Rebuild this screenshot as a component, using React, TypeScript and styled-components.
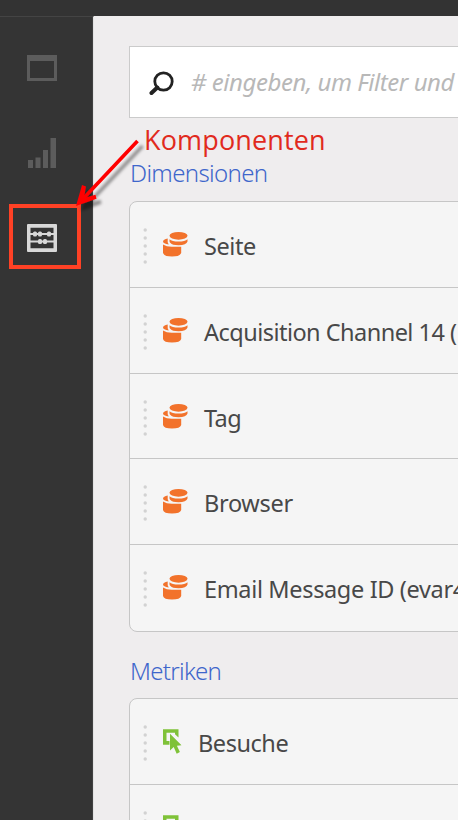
import React from 'react';
import styled, { createGlobalStyle } from 'styled-components';

const GlobalStyle = createGlobalStyle`
  * { box-sizing: border-box; }
  body { margin: 0; background: #efedee; overflow: hidden; }
`;

const Page = styled.div`
  position: relative;
  width: 458px;
  height: 820px;
  overflow: hidden;
  display: flex;
  flex-direction: column;
  background: #efedee;
  font-family: 'Noto Sans', 'Open Sans', sans-serif;
  color: #484848;
`;

const TopBar = styled.header`
  flex: 0 0 16px;
  background: #333333;
`;

const Body = styled.div`
  flex: 1;
  min-height: 0;
  display: flex;
`;

const Sidebar = styled.nav`
  flex: 0 0 94px;
  display: flex;
  flex-direction: column;
  padding: 38px 0 0 26px;
  background: #343434;
  border-top: 1px solid #444444;
  border-right: 1px solid #e2e2e2;
  box-shadow: inset -1px 0 #414141;
`;

const NavItem = styled.button<{ $gap?: number }>`
  display: block;
  width: 32px;
  height: 32px;
  margin: 0 0 ${(p) => p.$gap ?? 0}px;
  padding: 0;
  border: 0;
  background: none;
  svg { display: block; }
`;

const Panel = styled.main`
  flex: 1;
  min-width: 0;
  display: flex;
  flex-direction: column;
  padding: 30px 0 0 35px;
`;

const Search = styled.label`
  flex: 0 0 72px;
  display: flex;
  align-items: center;
  width: 360px;
  padding-left: 19px;
  background: #ffffff;
  border: 1px solid #cbcbcb;
  svg { flex: none; margin-top: 2px; }
`;

const Placeholder = styled.span`
  margin-left: 17px;
  font-size: 24px;
  font-style: italic;
  line-height: 32px;
  letter-spacing: -0.45px;
  white-space: nowrap;
  color: #b8b8b8;
`;

const Heading = styled.h2<{ $top: number; $bottom: number; $track: number }>`
  flex: 0 0 32px;
  margin: ${(p) => p.$top}px 0 ${(p) => p.$bottom}px;
  padding-left: 1px;
  font-size: 24px;
  font-weight: 300;
  line-height: 32px;
  letter-spacing: ${(p) => p.$track}px;
  color: #3e66cb;
`;

const Card = styled.ul`
  flex: none;
  width: 360px;
  margin: 0;
  padding: 0;
  list-style: none;
  background: #f5f5f5;
  border: 1px solid #c6c6c6;
  border-radius: 8px;
`;

const Row = styled.li<{ $height: number }>`
  display: flex;
  align-items: flex-start;
  height: ${(p) => p.$height}px;
  padding-left: 12px;
  border-bottom: 1px solid #c6c6c6;
  &:last-child { border-bottom: 0; }
`;

const Grip = styled.svg`
  flex: none;
  width: 6px;
  height: 38px;
  margin-top: 25px;
`;

const RowIcon = styled.svg<{ $width: number }>`
  flex: none;
  width: ${(p) => p.$width}px;
  height: 26px;
  margin: 29px 0 0 14px;
`;

const Label = styled.span<{ $track: number }>`
  margin: 27px 0 0 16px;
  font-size: 23.5px;
  line-height: 34px;
  letter-spacing: ${(p) => p.$track}px;
  white-space: nowrap;
`;

const Annotation = styled.div`
  position: absolute;
  inset: 0;
  pointer-events: none;
`;

const Highlight = styled.div`
  position: absolute;
  left: 9px;
  top: 204px;
  width: 72px;
  height: 65px;
  border: 4px solid #ff4125;
`;

const Arrow = styled.svg`
  position: absolute;
  left: 60px;
  top: 130px;
`;

const Callout = styled.span`
  position: absolute;
  left: 144px;
  top: 121px;
  font-family: 'Open Sans', 'Noto Sans', sans-serif;
  font-size: 27px;
  line-height: 37px;
  letter-spacing: 0.15px;
  color: #e12a1d;
`;

const WindowIcon = () => (
  <svg width="32" height="32" viewBox="0 0 32 32">
    <path fill="#5c5c5c" fillRule="evenodd" d="M1 0h30v26H1zM4 6v17h24V6z" />
  </svg>
);

const BarsIcon = () => (
  <svg width="32" height="32" viewBox="0 0 32 32" fill="#5c5c5c">
    <path d="M2 23h5v8H2zM9.5 20.500h5V31h-5zM17 13h5v18h-5zM24.500 1h5.500v30h-5.500z" />
  </svg>
);

const AbacusIcon = () => (
  <svg width="32" height="32" viewBox="0 0 32 32">
    <path fill="#d8d8d8" fillRule="evenodd" d="M2 1h28q1 0 1 1v26q0 1-1 1H2q-1 0-1-1V2q0-1 1-1zM4.500 4.700v20.600h23V4.700z" />
    <path stroke="#d8d8d8" strokeWidth="1.900" d="M4 11h24M4 18.500h24" />
    <g fill="#d8d8d8">
      <rect x="7" y="8.600" width="4" height="5" rx="1.500" />
      <rect x="12" y="8.600" width="4" height="5" rx="1.500" />
      <rect x="21" y="8.600" width="4" height="5" rx="1.500" />
      <rect x="12" y="16" width="4" height="5" rx="1.500" />
      <rect x="17" y="16" width="4" height="5" rx="1.500" />
    </g>
  </svg>
);

const SearchIcon = () => (
  <svg width="25" height="25" viewBox="0 0 25 25" fill="none" stroke="#222222">
    <circle cx="14.500" cy="10.500" r="8.700" strokeWidth="2.800" />
    <path d="M8.300 16.500L2.500 22" strokeWidth="4" strokeLinecap="round" />
  </svg>
);

const GripDots = () => (
  <Grip viewBox="0 0 6 38" fill="#d2d2d2">
    {[3, 11, 19, 27, 35].map((y) => (
      <circle key={y} cx="3.200" cy={y} r="1.700" />
    ))}
  </Grip>
);

const DimensionIcon = () => (
  <RowIcon $width={26} viewBox="0 0 26 26" fill="#f2722b">
    <ellipse cx="16.500" cy="4.800" rx="9" ry="3.900" />
    <path d="M7.500 8.200Q10 10.500 16.500 10.500T25.500 8.200v2.300q-1 3.700-9 3.700-6.300 0-8-2.200-1-.8-1-1.700z" />
    <path d="M5.700 7.500v3.700l1 2.300Q1 12.500 1 10.500 1.200 8.300 5.700 7.500z" />
    <path d="M1 13.500q3.400 2.300 8.700 2.300h9.500V22q-1 3.500-9.200 3.500T1 22z" />
  </RowIcon>
);

const MetricIcon = () => (
  <RowIcon $width={20} viewBox="0 0 20 26" fill="#7fc238">
    <path d="M1 1.300h15.500v8.200L13 6.300V4.800H4.500v8.300h3v3.600H1z" />
    <path d="M8 5.800L19.500 17.300l-4.600.5 3 6.300-3.200 1.600-3-6.600L8 22.400z" />
  </RowIcon>
);

interface Item {
  name: string;
  height: number;
  track: number;
}

const dimensions: Item[] = [
  { name: 'Seite', height: 86, track: -0.4 },
  { name: 'Acquisition Channel 14 (', height: 86, track: -0.53 },
  { name: 'Tag', height: 85, track: -0.6 },
  { name: 'Browser', height: 86, track: -0.3 },
  { name: 'Email Message ID (evar4', height: 86, track: -0.35 },
];

const metrics: Item[] = [
  { name: 'Besuche', height: 86, track: -0.45 },
  { name: 'Seitenansichten', height: 86, track: -0.45 },
];

const ItemList = ({ items, icon }: { items: Item[]; icon: React.ReactNode }) => (
  <Card>
    {items.map((item) => (
      <Row key={item.name} $height={item.height}>
        <GripDots />
        {icon}
        <Label $track={item.track}>{item.name}</Label>
      </Row>
    ))}
  </Card>
);

export default function App() {
  return (
    <Page>
      <GlobalStyle />
      <TopBar />
      <Body>
        <Sidebar>
          <NavItem $gap={50} aria-label="Bedienfelder"><WindowIcon /></NavItem>
          <NavItem $gap={54} aria-label="Visualisierungen"><BarsIcon /></NavItem>
          <NavItem aria-label="Komponenten"><AbacusIcon /></NavItem>
        </Sidebar>
        <Panel>
          <Search>
            <SearchIcon />
            <Placeholder># eingeben, um Filter und</Placeholder>
          </Search>
          <Heading $top={39} $bottom={12} $track={-0.65}>Dimensionen</Heading>
          <ItemList items={dimensions} icon={<DimensionIcon />} />
          <Heading $top={23} $bottom={11} $track={-0.7}>Metriken</Heading>
          <ItemList items={metrics} icon={<MetricIcon />} />
        </Panel>
      </Body>
      <Annotation>
        <Highlight />
        <Arrow width="110" height="90" viewBox="0 0 110 90">
          <defs>
            <filter id="arrowShadow" x="-20%" y="-20%" width="150%" height="150%">
              <feDropShadow dx="5" dy="5" stdDeviation="1.500" floodColor="#000000" floodOpacity="0.4" />
            </filter>
          </defs>
          <g filter="url(#arrowShadow)" fill="none" stroke="#ff0000">
            <path d="M77.500 11L21 71" strokeWidth="3.600" />
            <path fill="#ff0000" stroke="none" d="M16 76L22 55l4 1.500-2 11.500 11.500-3.200 1 3.900z" />
          </g>
        </Arrow>
        <Callout>Komponenten</Callout>
      </Annotation>
    </Page>
  );
}
